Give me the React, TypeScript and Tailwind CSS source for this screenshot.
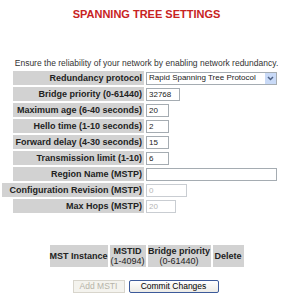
export default function App() {
  const rows = [
    { label: "Bridge priority (0-61440)", value: "32768", w: "w-[34px]" },
    { label: "Maximum age (6-40 seconds)", value: "20", w: "w-[23px]" },
    { label: "Hello time (1-10 seconds)", value: "2", w: "w-[23px]" },
    { label: "Forward delay (4-30 seconds)", value: "15", w: "w-[23px]" },
    { label: "Transmission limit (1-10)", value: "6", w: "w-[23px]" },
  ];

  return (
    <div className="w-[293px] h-[303px] bg-white text-[#222] font-['Liberation_Sans',Arial,sans-serif]">
      <h1 className="pt-[8px] text-center text-[11px] font-bold leading-[13px] text-[#c8231f]">
        SPANNING TREE SETTINGS
      </h1>

      <p className="mt-[37px] text-center text-[8.5px] leading-[10px] text-[#333]">
        Ensure the reliability of your network by enabling network redundancy.
      </p>

      {/* settings table */}
      <div className="mt-[3px] flex flex-col gap-[2px] pl-[13px]">
        <div className="flex items-center">
          <div className="w-[131px] h-[14px] bg-[#d2d2d2] pr-[2px] text-right text-[9px] font-bold leading-[14px] whitespace-nowrap">
            Redundancy protocol
          </div>
          <div className="ml-[2px] flex h-[13px] w-[131px] items-center border border-[#a5acb2] bg-white pl-[2px] text-[8px]">
            <span className="flex-1">Rapid Spanning Tree Protocol</span>
            <span className="flex h-[11px] w-[11px] items-center justify-center bg-[#c9daf7]">
              <svg width="7" height="5" viewBox="0 0 7 5">
                <path d="M1 1 L3.5 3.5 L6 1" stroke="#4d6185" strokeWidth="1.5" fill="none" />
              </svg>
            </span>
          </div>
        </div>

        {rows.map((r) => (
          <div key={r.label} className="flex items-center">
            <div className="w-[131px] h-[14px] bg-[#d2d2d2] pr-[2px] text-right text-[9px] font-bold leading-[14px] whitespace-nowrap">
              {r.label}
            </div>
            <div className={`ml-[2px] h-[13px] ${r.w} border border-[#a5acb2] bg-white pl-[2px] text-[8px] leading-[11px]`}>
              {r.value}
            </div>
          </div>
        ))}

        <div className="flex items-center">
          <div className="w-[131px] h-[14px] bg-[#d2d2d2] pr-[2px] text-right text-[9px] font-bold leading-[14px] whitespace-nowrap">
            Region Name (MSTP)
          </div>
          <div className="ml-[2px] h-[13px] w-[131px] border border-[#a5acb2] bg-white" />
        </div>

        <div className="flex items-center">
          <div className="-ml-[11px] w-[142px] h-[14px] bg-[#d2d2d2] pr-[2px] text-right text-[9px] font-bold leading-[14px] whitespace-nowrap">
            Configuration Revision (MSTP)
          </div>
          <div className="ml-[2px] h-[13px] w-[41px] border border-[#c9cdd2] bg-white pl-[2px] text-[8px] leading-[11px] text-[#b5b5b5]">
            0
          </div>
        </div>

        <div className="flex items-center">
          <div className="w-[131px] h-[14px] bg-[#d2d2d2] pr-[2px] text-right text-[9px] font-bold leading-[14px] whitespace-nowrap">
            Max Hops (MSTP)
          </div>
          <div className="ml-[2px] h-[13px] w-[30px] border border-[#c9cdd2] bg-white pl-[2px] text-[8px] leading-[11px] text-[#b5b5b5]">
            20
          </div>
        </div>
      </div>

      {/* MST instance table */}
      <div className="mt-[32px] flex justify-center gap-[2px] text-[9px] font-bold leading-[10px]">
        <div className="flex h-[22px] w-[58px] items-center justify-center bg-[#d2d2d2]">MST Instance</div>
        <div className="flex h-[22px] w-[36px] flex-col items-center justify-center bg-[#d2d2d2]">
          <span>MSTID</span>
          <span className="font-normal">(1-4094)</span>
        </div>
        <div className="flex h-[22px] w-[63px] flex-col items-center justify-center bg-[#d2d2d2]">
          <span>Bridge priority</span>
          <span className="font-normal">(0-61440)</span>
        </div>
        <div className="flex h-[22px] w-[31px] items-center justify-center bg-[#d2d2d2]">Delete</div>
      </div>

      <div className="mt-[13px] flex justify-center gap-[4px] pr-[2px] text-[8.5px]">
        <button className="h-[13px] w-[52px] border border-[#d8d5cc] bg-[#f4f3ee] leading-[11px] text-[#b6b3a8]">
          Add MSTI
        </button>
        <button className="h-[13px] w-[90px] rounded-[2px] border border-[#3c5a9a] bg-gradient-to-b from-white to-[#ecebe6] leading-[11px] text-black">
          Commit Changes
        </button>
      </div>
    </div>
  );
}
